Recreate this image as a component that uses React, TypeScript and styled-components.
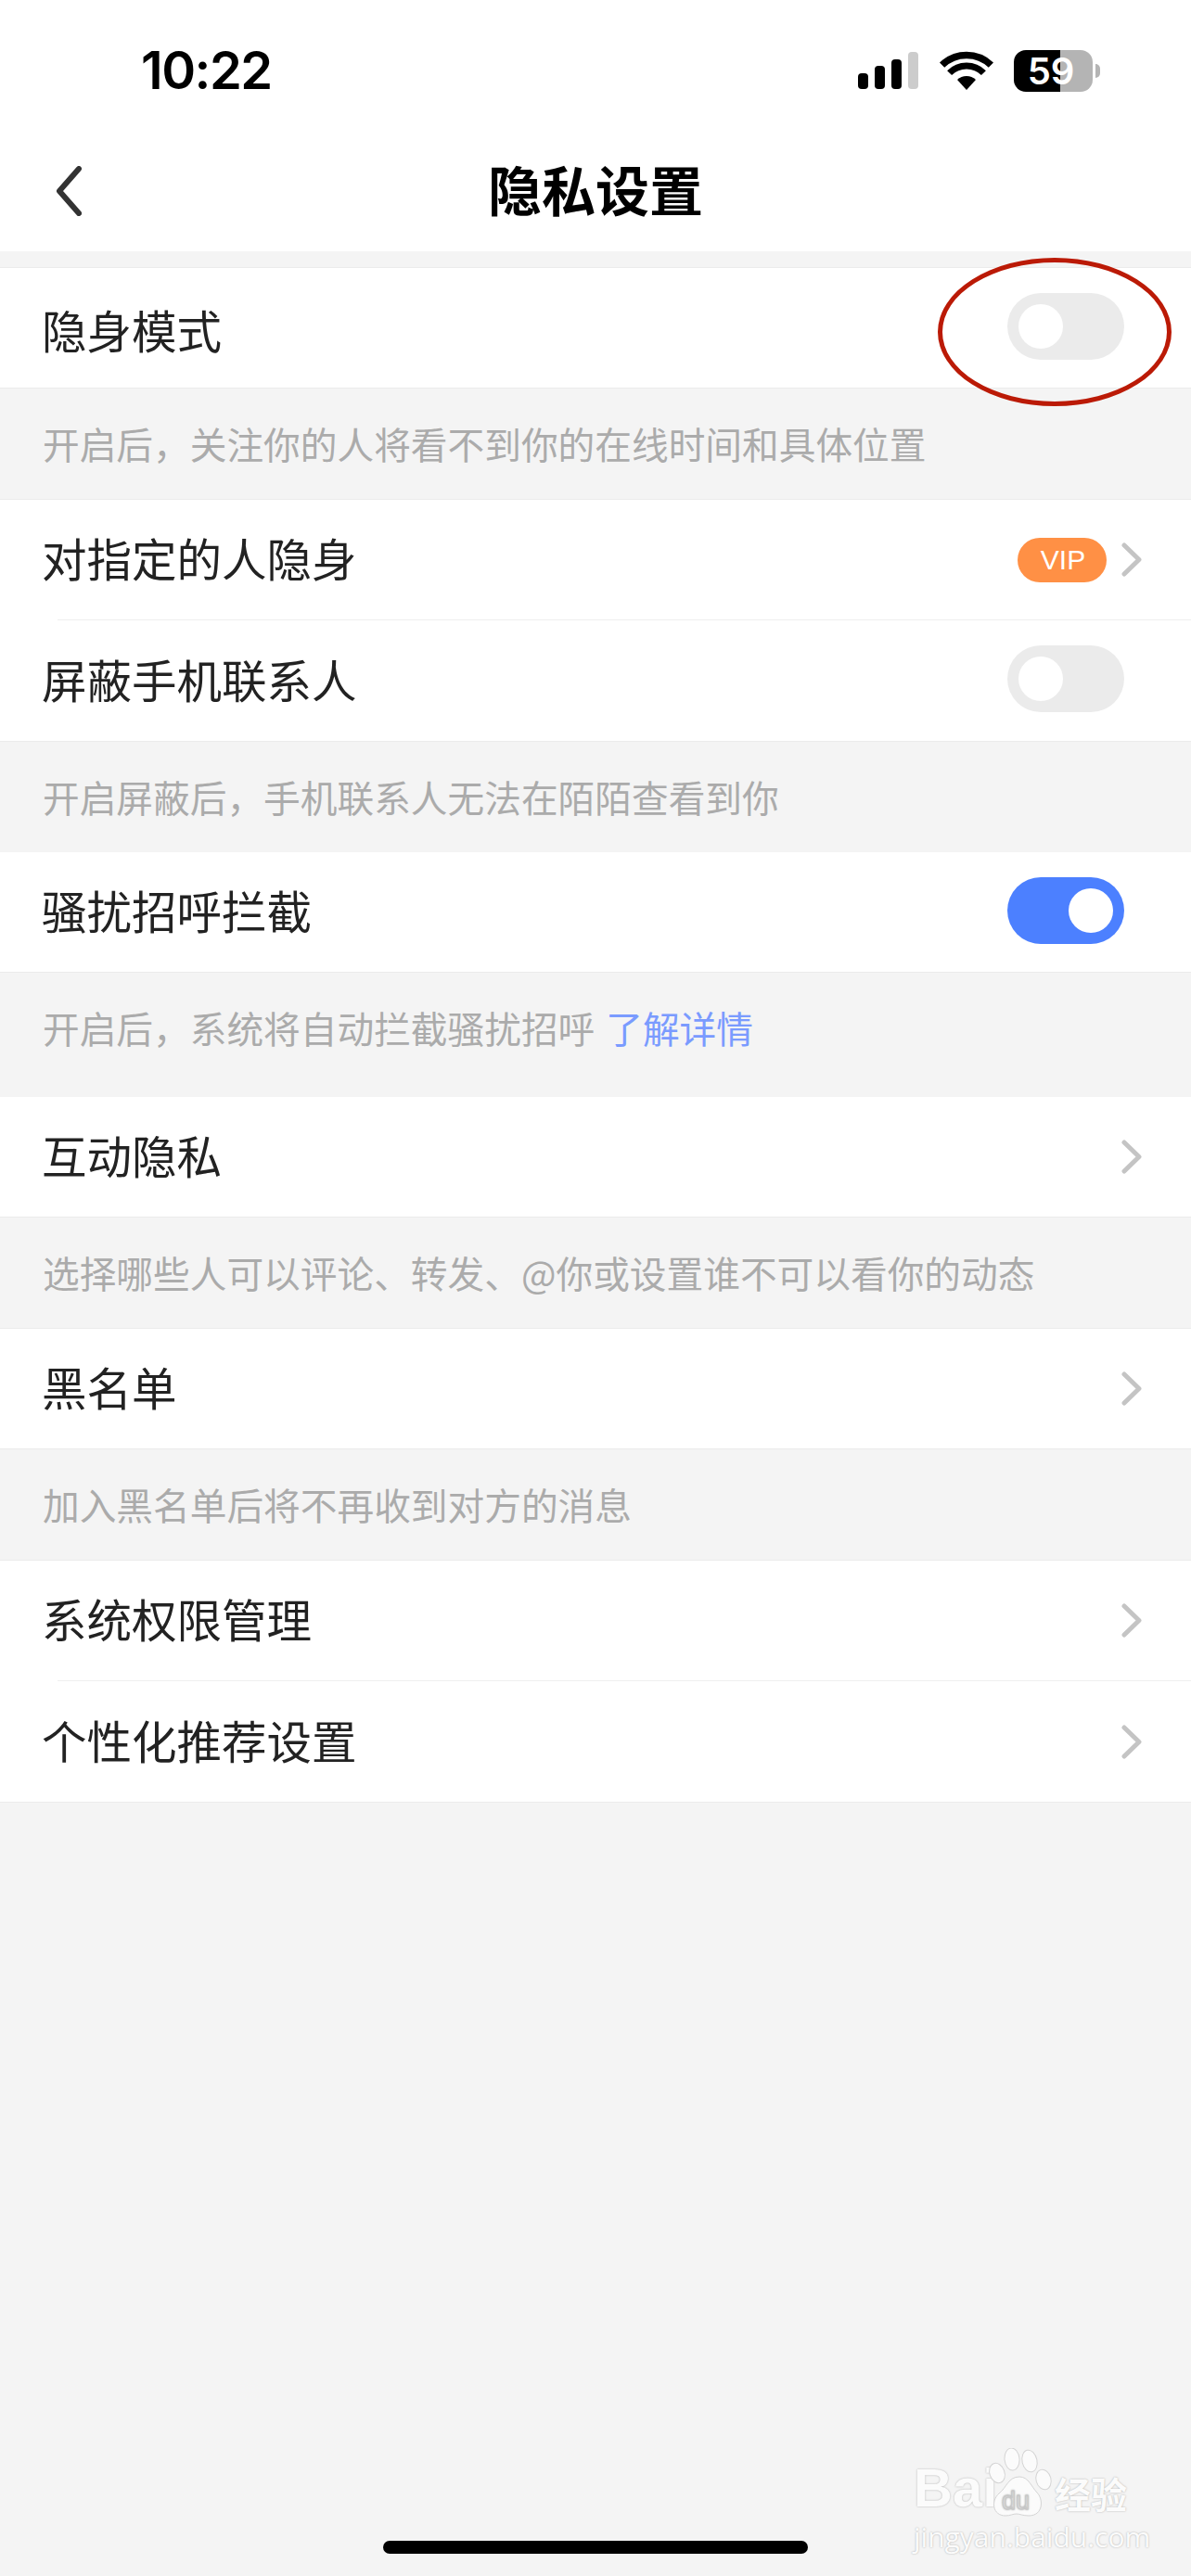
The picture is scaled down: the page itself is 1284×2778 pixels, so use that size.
import React from 'react';
import styled, { createGlobalStyle } from 'styled-components';

const CJK = `"Noto Sans CJK SC", "Noto Sans", sans-serif`;

const App = () => {
    return (
        <Page>
            <GlobalStyle />
            <StatusBar>
                <Clock>10:22</Clock>
                <StatusIcons>
                    <Signal>
                        <SignalBar $h={17} />
                        <SignalBar $h={25} />
                        <SignalBar $h={32} />
                        <SignalBar $h={40} $off />
                    </Signal>
                    <svg width="58" height="42" viewBox="0 0 58 42">
                        <path d="M29 42 L19 31 A14.5 14.5 0 0 1 39 31 Z" fill="#000" />
                        <path d="M10.6 23.6 A26 26 0 0 1 47.4 23.6" fill="none" stroke="#000" strokeWidth="7" />
                        <path d="M2.6 15.1 A38 38 0 0 1 55.4 15.1" fill="none" stroke="#000" strokeWidth="7.5" />
                    </svg>
                    <Battery>
                        <BatteryBody>
                            <BatteryLevel>59</BatteryLevel>
                        </BatteryBody>
                        <BatteryNub />
                    </Battery>
                </StatusIcons>
            </StatusBar>

            <NavBar>
                <BackIcon width="28" height="54" viewBox="0 0 28 54">
                    <polyline points="25,3 4,27 25,51" />
                </BackIcon>
                <Title>隐私设置</Title>
            </NavBar>

            <Content>
                <Group>
                    <Row>
                        <RowLabel $low>隐身模式</RowLabel>
                        <Toggle />
                    </Row>
                </Group>
                <Caption>开启后，关注你的人将看不到你的在线时间和具体位置</Caption>

                <Group>
                    <Row>
                        <RowLabel>对指定的人隐身</RowLabel>
                        <RowRight>
                            <VipBadge>VIP</VipBadge>
                            <Chevron />
                        </RowRight>
                    </Row>
                    <Divider />
                    <Row $tall>
                        <RowLabel>屏蔽手机联系人</RowLabel>
                        <Toggle />
                    </Row>
                </Group>
                <Caption>开启屏蔽后，手机联系人无法在陌陌查看到你</Caption>

                <Group $flat>
                    <Row>
                        <RowLabel>骚扰招呼拦截</RowLabel>
                        <Toggle $on />
                    </Row>
                </Group>
                <Caption $tall>
                    开启后，系统将自动拦截骚扰招呼 <CaptionLink>了解详情</CaptionLink>
                </Caption>

                <Group $flat>
                    <Row>
                        <RowLabel>互动隐私</RowLabel>
                        <Chevron />
                    </Row>
                </Group>
                <Caption>选择哪些人可以评论、转发、@你或设置谁不可以看你的动态</Caption>

                <Group>
                    <Row>
                        <RowLabel>黑名单</RowLabel>
                        <Chevron />
                    </Row>
                </Group>
                <Caption>加入黑名单后将不再收到对方的消息</Caption>

                <Group>
                    <Row>
                        <RowLabel>系统权限管理</RowLabel>
                        <Chevron />
                    </Row>
                    <Divider />
                    <Row $tall>
                        <RowLabel>个性化推荐设置</RowLabel>
                        <Chevron />
                    </Row>
                </Group>
            </Content>

            <RedCircle />

            <Watermark>
                <WatermarkTop>
                    <WatermarkBai>Bai</WatermarkBai>
                    <svg width="72" height="76" viewBox="0 0 72 76">
                        <g fill="#fbfbfb" stroke="#d4d4d4" strokeWidth="1">
                            <ellipse cx="10" cy="27" rx="8" ry="11" transform="rotate(-20 10 27)" />
                            <ellipse cx="26" cy="12" rx="8" ry="12" transform="rotate(-5 26 12)" />
                            <ellipse cx="45" cy="14" rx="8" ry="12" transform="rotate(-12 45 14)" />
                            <ellipse cx="60" cy="34" rx="8" ry="11" transform="rotate(-15 60 34)" />
                            <path d="M34 31 C44 31 47 42 53 48 C60 55 60 73 44 73 C38 73 34 71 31 71 C27 71 24 73 19 73 C5 73 3 57 12 49 C20 43 22 31 34 31 Z" />
                        </g>
                        <text x="15" y="66" fontFamily='"Liberation Sans", sans-serif' fontSize="27" fill="#ececec" stroke="#c8c8c8" strokeWidth="0.8">du</text>
                    </svg>
                    <WatermarkCn>经验</WatermarkCn>
                </WatermarkTop>
                <WatermarkUrl>jingyan.baidu.com</WatermarkUrl>
            </Watermark>

            <HomeIndicator />
        </Page>
    );
}

const Toggle = ({ $on }: { $on?: boolean }) => (
    <ToggleTrack $on={$on}>
        <ToggleKnob />
    </ToggleTrack>
);

const Chevron = () => (
    <ChevronIcon width="22" height="37" viewBox="0 0 22 37">
        <polyline points="3,3 19,18.5 3,34" />
    </ChevronIcon>
);

export default App;


const GlobalStyle = createGlobalStyle`
    html, body {
        margin: 0;
        padding: 0;
        background: #f4f4f4;
    }
`;

const Page = styled.div`
    position: relative;
    width: 1284px;
    height: 2778px;
    overflow: hidden;
    background: #f4f4f4;
    font-family: ${CJK};
`;

const StatusBar = styled.div`
    height: 152px;
    box-sizing: border-box;
    background: #fff;
    display: flex;
    align-items: center;
    justify-content: space-between;
    padding: 0 98px 0 152px;
`;

const Clock = styled.div`
    font-family: Inter, "Liberation Sans", sans-serif;
    font-size: 56px;
    font-weight: 600;
    letter-spacing: -1.5px;
    color: #000;
`;

const StatusIcons = styled.div`
    display: flex;
    align-items: center;
`;

const Signal = styled.div`
    display: flex;
    align-items: flex-end;
    gap: 7px;
    height: 40px;
    margin-right: 23px;
`;

const SignalBar = styled.div<{ $h: number; $off?: boolean }>`
    width: 11px;
    height: ${({ $h }) => $h}px;
    border-radius: 4px;
    background: ${({ $off }) => ($off ? '#cccccc' : '#000')};
`;

const Battery = styled.div`
    display: flex;
    align-items: center;
    margin-left: 22px;
`;

const BatteryBody = styled.div`
    width: 85px;
    height: 45px;
    border-radius: 13px;
    background: linear-gradient(to right, #000 0, #000 50px, #b4b4b4 50px, #b4b4b4 100%);
    display: flex;
    align-items: center;
    justify-content: center;
`;

const BatteryLevel = styled.span`
    font-family: Inter, "Liberation Sans", sans-serif;
    font-size: 40px;
    font-weight: 600;
    color: #fff;
    margin-left: -5px;
`;

const BatteryNub = styled.div`
    width: 5px;
    height: 15px;
    margin-left: 3px;
    border-radius: 0 8px 8px 0;
    background: #b4b4b4;
`;

const NavBar = styled.div`
    position: relative;
    height: 119px;
    box-sizing: border-box;
    padding-bottom: 18px;
    background: #fff;
    display: flex;
    align-items: center;
    justify-content: center;
`;

const BackIcon = styled.svg`
    position: absolute;
    left: 60px;
    top: 27px;

    polyline {
        fill: none;
        stroke: #333;
        stroke-width: 6;
        stroke-linecap: round;
        stroke-linejoin: round;
    }
`;

const Title = styled.div`
    font-size: 58px;
    font-weight: 700;
    line-height: 80px;
    color: #000;
`;

const Content = styled.div`
    padding-top: 17px;
`;

const Group = styled.div<{ $flat?: boolean }>`
    background: #fff;
    border-top: ${({ $flat }) => ($flat ? 'none' : '1px solid #ebebeb')};
    border-bottom: 1px solid #ebebeb;
`;

const Row = styled.div<{ $tall?: boolean }>`
    height: ${({ $tall }) => ($tall ? '130px' : '129px')};
    box-sizing: border-box;
    padding: 0 53px 0 45px;
    display: flex;
    align-items: center;
    justify-content: space-between;
`;

const RowLabel = styled.div<{ $low?: boolean }>`
    font-size: 48.5px;
    line-height: 64px;
    color: #222;
    margin-bottom: ${({ $low }) => ($low ? '-3px' : '5px')};
`;

const RowRight = styled.div`
    display: flex;
    align-items: center;
    gap: 16px;
`;

const Divider = styled.div`
    height: 1px;
    margin-left: 62px;
    background: #efefef;
`;

const Caption = styled.div<{ $tall?: boolean }>`
    height: ${({ $tall }) => ($tall ? '134px' : '119px')};
    box-sizing: border-box;
    padding: 31px 46px 0;
    font-size: 39.7px;
    line-height: 56px;
    color: #ababab;
`;

const CaptionLink = styled.span`
    color: #7a9bff;
    margin-left: 3px;
`;

const ToggleTrack = styled.div<{ $on?: boolean }>`
    width: 126px;
    height: 72px;
    margin: 0 19px 4px 0;
    box-sizing: border-box;
    padding: 0 12px;
    border-radius: 36px;
    background: ${({ $on }) => ($on ? '#4c80ff' : '#ebebeb')};
    display: flex;
    align-items: center;
    justify-content: ${({ $on }) => ($on ? 'flex-end' : 'flex-start')};
`;

const ToggleKnob = styled.div`
    width: 48px;
    height: 48px;
    border-radius: 50%;
    background: #fff;
`;

const VipBadge = styled.div`
    width: 96px;
    height: 48px;
    border-radius: 24px;
    background: #ff9045;
    color: #fff;
    font-family: "Liberation Sans", sans-serif;
    font-size: 30px;
    line-height: 48px;
    text-align: center;
    padding-left: 2px;
    box-sizing: border-box;
`;

const ChevronIcon = styled.svg`
    display: block;

    polyline {
        fill: none;
        stroke: #c4c4c4;
        stroke-width: 5;
        stroke-linecap: round;
        stroke-linejoin: round;
    }
`;

const RedCircle = styled.div`
    position: absolute;
    left: 1011px;
    top: 278px;
    width: 252px;
    height: 160px;
    box-sizing: border-box;
    border: 5px solid #bb1a06;
    border-radius: 50%;
`;

const Watermark = styled.div`
    position: absolute;
    left: 985px;
    top: 2640px;
    width: 232px;
    color: #fbfbfb;
    font-family: "Open Sans", "Liberation Sans", sans-serif;
    text-shadow: 0 0 2px #a8a8a8;
`;

const WatermarkTop = styled.div`
    display: flex;
    align-items: flex-end;
    height: 76px;
`;

const WatermarkBai = styled.span`
    font-family: "Liberation Sans", sans-serif;
    font-size: 58px;
    font-weight: 700;
    line-height: 66px;
    width: 80px;
`;

const WatermarkCn = styled.span`
    font-family: ${CJK};
    font-size: 39px;
    font-weight: 700;
    line-height: 56px;
    white-space: nowrap;
`;

const WatermarkUrl = styled.div`
    font-size: 30px;
    line-height: 36px;
    margin-top: 2px;
    white-space: nowrap;
`;

const HomeIndicator = styled.div`
    position: absolute;
    left: 413px;
    top: 2740px;
    width: 458px;
    height: 14px;
    border-radius: 7px;
    background: #000;
`;
